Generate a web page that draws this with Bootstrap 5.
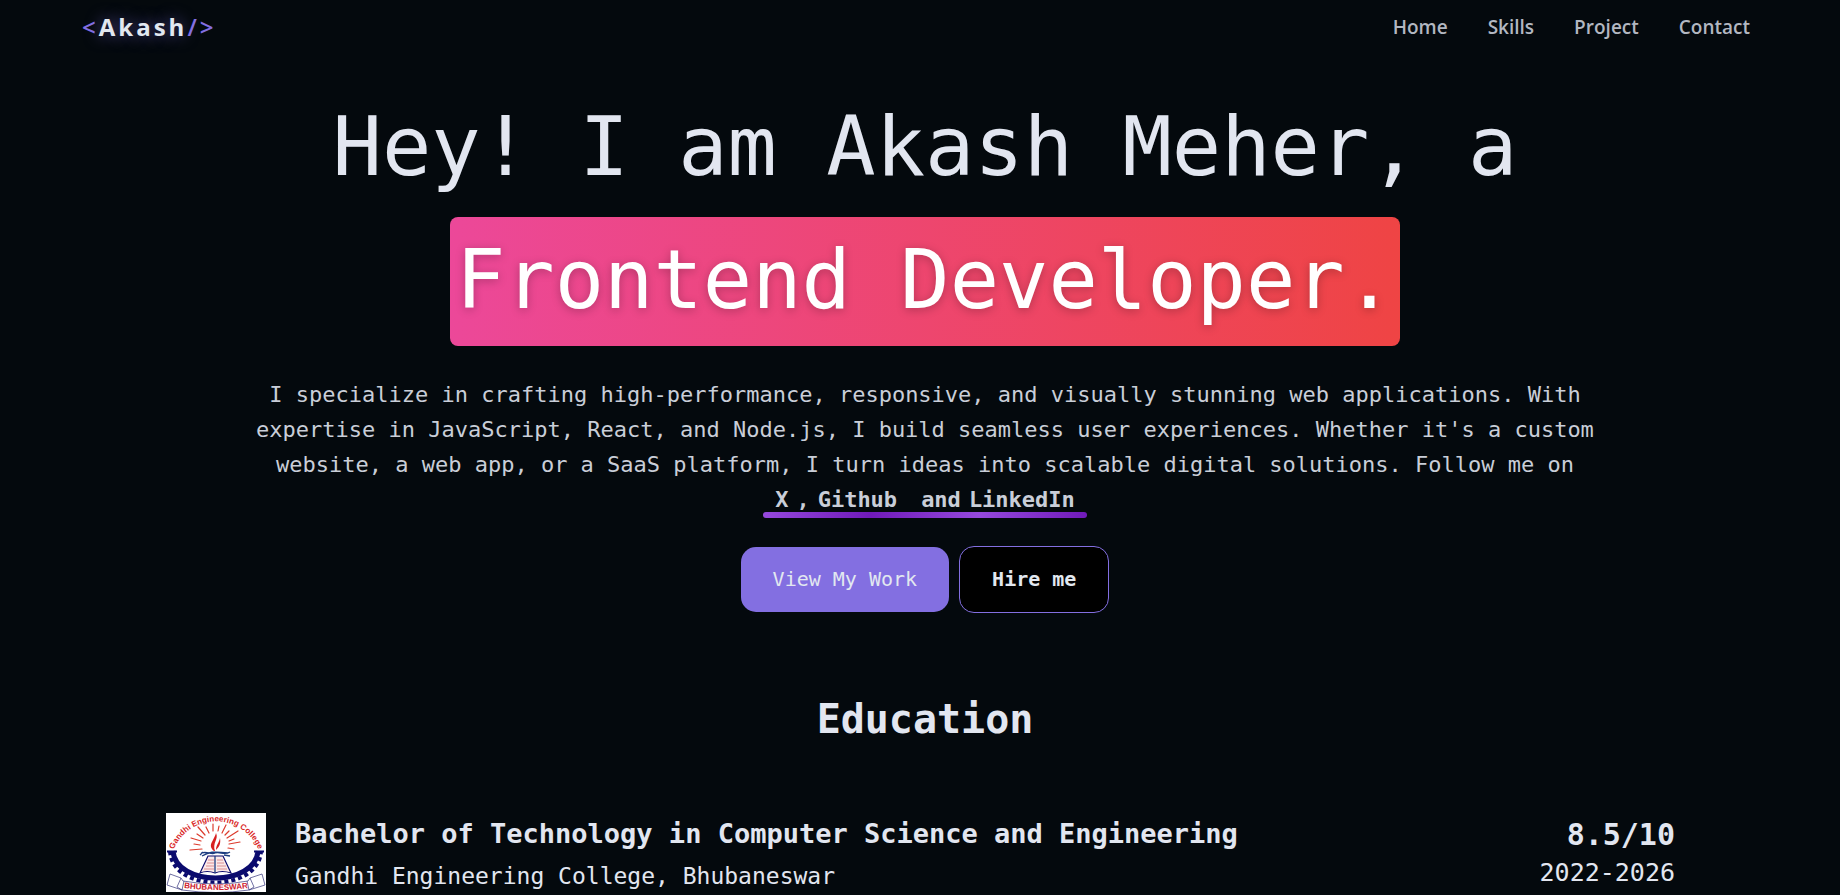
<!DOCTYPE html>
<html lang="en">
<head>
<meta charset="utf-8">
<meta name="viewport" content="width=device-width, initial-scale=1">
<title>Akash Meher</title>
<link rel="stylesheet" href="https://cdn.jsdelivr.net/npm/bootstrap@5.3.0/dist/css/bootstrap.min.css">
<style>
  :root { --ink: #e2e8f0; --accent: #836fe1; --page: #04090d; }
  body { background: var(--page); color: #e2e6f0; font-family: "DejaVu Sans Mono", monospace; }
  .site-nav { font-family: "Open Sans", sans-serif; padding: 8px 90px 8px 82px; min-height: 54px; }
  .site-logo { font-size: 24px; line-height: 36px; font-weight: 700; letter-spacing: 3px; color: #e2e8f0; text-shadow: 0 0 16px rgba(131,111,225,.6); }
  .site-logo span { color: var(--accent); font-weight: 600; text-shadow: none; }
  .site-links { gap: 40px; }
  .site-links a { font-size: 19px; line-height: 36px; font-weight: 600; color: #b2b7c1; text-decoration: none; }
  main { padding-left: 10px; }
  .hero-title { font-size: 82px; line-height: 134px; font-weight: 400; padding-top: 26px; gap: 3px; }
  .hero-role { line-height: 125px; color: #fff; padding: 0 6px 4px; border-radius: 8px; background: linear-gradient(to right, #ec4899, #ef4444); text-shadow: 0 2px 10px rgba(0,0,0,.25); }
  .hero-copy { font-size: 22px; line-height: 35px; color: #c9ced8; max-width: 1366px; padding-top: 31px; }
  .socials { font-weight: 700; padding: 0 12px; }
  .socials::after { content: ""; position: absolute; left: 0; right: 0; bottom: -1px; height: 6px; border-radius: 3px; background: linear-gradient(to right, #9649dd, #701ab9, #9649dd, #701ab9); }
  .socials a { color: inherit; text-decoration: none; }
  .cta-row { gap: 10px; padding-top: 29px; }
  .cta { font-size: 20px; line-height: 33px; padding: 16px 32px; border-radius: 15px; border: 1px solid var(--accent); color: var(--ink); background: #000; font-weight: 700; }
  .cta-main { background: var(--accent); font-weight: 400; border: 0; }
  .cta:hover { color: #fff; border-color: #fff; }
  .section-title { font-size: 40px; line-height: 48px; font-weight: 700; padding-top: 82px; }
  .school { padding: 70px 165px 0 156px; }
  .school-text { padding-left: 29px; }
  .crest { width: 100px; height: 79px; background: #fff; }
  .degree { font-size: 27px; line-height: 42px; font-weight: 700; }
  .place { font-size: 23px; line-height: 42px; }
  .grade { font-size: 30px; line-height: 44px; font-weight: 700; }
  .years { font-size: 25px; line-height: 32px; }
</style>
<script src="https://cdn.jsdelivr.net/npm/bootstrap@5.3.0/dist/js/bootstrap.bundle.min.js"></script>
</head>
<body>
<header>
  <nav class="site-nav d-flex align-items-center justify-content-between">
    <a class="site-logo text-decoration-none" href="#home"><span>&lt;</span>Akash<span>/&gt;</span></a>
    <ul class="site-links list-unstyled d-flex mb-0">
      <li><a href="#home">Home</a></li>
      <li><a href="#skills">Skills</a></li>
      <li><a href="#project">Project</a></li>
      <li><a href="#contact">Contact</a></li>
    </ul>
  </nav>
</header>
<main>
  <section id="home" class="text-center">
    <h1 class="hero-title d-flex flex-column align-items-center mb-0"><span>Hey! I am Akash Meher, a</span><span class="hero-role">Frontend Developer.</span></h1>
    <p class="hero-copy mx-auto mb-0">I specialize in crafting high-performance, responsive, and visually stunning web applications. With expertise in JavaScript, React, and Node.js, I build seamless user experiences. Whether it's a custom website, a web app, or a SaaS platform, I turn ideas into scalable digital solutions. Follow me on<br>
      <span class="socials position-relative d-inline-flex"><a href="#x" class="me-2">X</a><span class="me-2">,</span><a href="#github" class="me-4">Github</a><span class="me-2">and</span><a href="#linkedin">LinkedIn</a></span></p>
    <div class="cta-row d-flex justify-content-center align-items-center">
      <button type="button" class="btn cta cta-main">View My Work</button>
      <button type="button" class="btn cta">Hire me</button>
    </div>
  </section>
  <section>
    <h2 class="section-title text-center mb-0">Education</h2>
    <article class="school d-flex">
      <svg class="crest flex-shrink-0" viewBox="0 0 100 79" role="img" aria-label="College crest">
        <defs>
          <path id="topArc" d="M7 38A46 46 0 0 1 93 38"/>
          <path id="lowArc" d="M10 74Q50 80 90 74"/>
        </defs>
        <g fill="none" stroke="#0b0b6e">
          <path d="M7 38C10 74 89 74 92 38" stroke-width="5"/>
          <path d="M4 38C6 80 93 80 95 38" stroke-width="4" stroke-dasharray="4 3"/>
          <path d="M1 38.5H11M88 38.5H98" stroke-width="2"/>
        </g>
        <g stroke="#dc3b2c" stroke-width="1.2" stroke-linecap="round">
          <path d="M36 36L24 37M34 32L28 31M35 28L25 25M37 25L31 21M39 22L32 14M43 20L40 14M47 18V11M52 18L53 13M56 20L60 12M59 22L63 18M61 25L72 18M63 28L68 26M63 31L74 29M62 35L68 36"/>
        </g>
        <path d="M48 38C41 32 48 28 50 20C53 26 46 30 49 38ZM50 37C50 32 53 30 54 25C55 31 53 34 50 37Z" fill="#d71f1f"/>
        <path d="M42 43H57L65 60Q56 57 49 60Q41 57 34 60Z" fill="#fbe9e9" stroke="#0b0b6e" stroke-width="1.2"/>
        <path d="M42 47H48M41 50H48M40 53H48M38 56H48M51 47H57M51 50H58M51 53H60M51 56H61" stroke="#dc8f92" stroke-width="1"/>
        <path d="M49 43V60M35 40C42 38 45 42 49 40C54 38 58 43 64 39M36 43C43 39 47 38 62 40M37 39L34 42M58 42L64 43" fill="none" stroke="#1b3c80" stroke-width="1.3"/>
        <path d="M4 61L15 65L17 68Q50 74 82 68L84 65L96 61L99 72L83 77Q50 82 16 77L1 72Z" fill="#fff" stroke="#34347b" stroke-width=".7"/>
        <path d="M15 65L11 74L16 77L18 68M84 65L88 74L83 77L81 68" fill="none" stroke="#34347b" stroke-width=".7"/>
        <text font-family="Liberation Sans, sans-serif" font-weight="700" font-size="8" fill="#d92525" text-anchor="middle"><textPath href="#topArc" startOffset="50%">Gandhi Engineering College</textPath></text>
        <text font-family="Liberation Sans, sans-serif" font-weight="700" font-size="8" fill="#cf2430" text-anchor="middle"><textPath href="#lowArc" startOffset="50%">BHUBANESWAR</textPath></text>
      </svg>
      <div class="school-text flex-grow-1">
        <h3 class="degree mb-0">Bachelor of Technology in Computer Science and Engineering</h3>
        <div class="place">Gandhi Engineering College, Bhubaneswar</div>
      </div>
      <div class="text-end">
        <div class="grade">8.5/10</div>
        <div class="years">2022-2026</div>
      </div>
    </article>
  </section>
</main>
</body>
</html>
